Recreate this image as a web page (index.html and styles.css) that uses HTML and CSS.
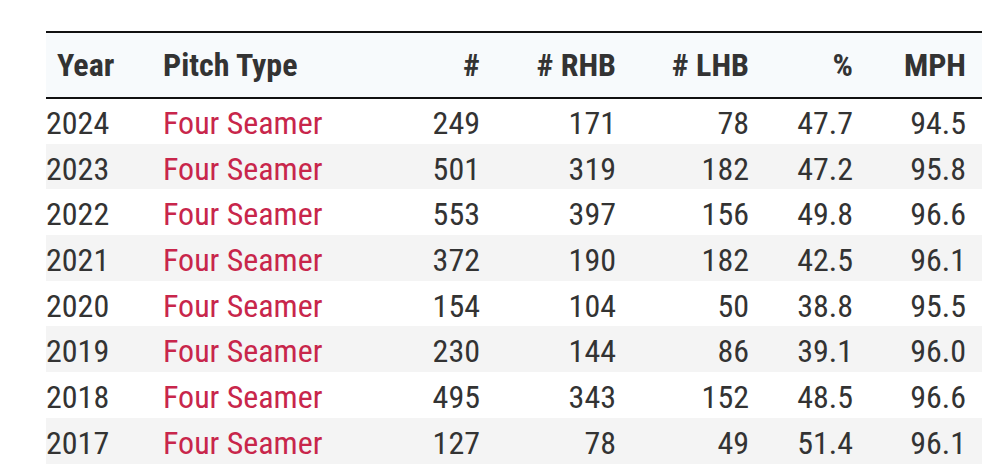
FILE: index.html
```html
<!DOCTYPE html>
<html>
<head>
<meta charset="utf-8">
<link rel="stylesheet" href="styles.css">
</head>
<body>
<div class="wrap">
<table class="stats">
  <colgroup>
    <col class="c-year"><col class="c-type"><col class="c-n"><col class="c-rhb"><col class="c-lhb"><col class="c-pct"><col class="c-mph">
  </colgroup>
  <thead>
    <tr>
      <th class="first">Year</th>
      <th>Pitch Type</th>
      <th class="num">#</th>
      <th class="num"># RHB</th>
      <th class="num"># LHB</th>
      <th class="num">%</th>
      <th class="num last">MPH</th>
    </tr>
  </thead>
  <tbody>
    <tr><td>2024</td><td class="type">Four Seamer</td><td class="num">249</td><td class="num">171</td><td class="num">78</td><td class="num">47.7</td><td class="num last">94.5</td></tr>
    <tr class="alt"><td>2023</td><td class="type">Four Seamer</td><td class="num">501</td><td class="num">319</td><td class="num">182</td><td class="num">47.2</td><td class="num last">95.8</td></tr>
    <tr><td>2022</td><td class="type">Four Seamer</td><td class="num">553</td><td class="num">397</td><td class="num">156</td><td class="num">49.8</td><td class="num last">96.6</td></tr>
    <tr class="alt"><td>2021</td><td class="type">Four Seamer</td><td class="num">372</td><td class="num">190</td><td class="num">182</td><td class="num">42.5</td><td class="num last">96.1</td></tr>
    <tr><td>2020</td><td class="type">Four Seamer</td><td class="num">154</td><td class="num">104</td><td class="num">50</td><td class="num">38.8</td><td class="num last">95.5</td></tr>
    <tr class="alt"><td>2019</td><td class="type">Four Seamer</td><td class="num">230</td><td class="num">144</td><td class="num">86</td><td class="num">39.1</td><td class="num last">96.0</td></tr>
    <tr><td>2018</td><td class="type">Four Seamer</td><td class="num">495</td><td class="num">343</td><td class="num">152</td><td class="num">48.5</td><td class="num last">96.6</td></tr>
    <tr class="alt"><td>2017</td><td class="type">Four Seamer</td><td class="num">127</td><td class="num">78</td><td class="num">49</td><td class="num">51.4</td><td class="num last">96.1</td></tr>
  </tbody>
</table>
</div>
</body>
</html>
```
FILE: styles.css
```css
html, body {
  margin: 0;
  padding: 0;
  background: #ffffff;
}
.wrap {
  padding: 31px 0 0 46px;
}
.stats {
  width: 936px;
  border-collapse: collapse;
  table-layout: fixed;
  font-family: "Roboto Condensed", Roboto, sans-serif;
  font-stretch: condensed;
  font-size: 32px;
  color: #333333;
}
.c-year { width: 117px; }
.c-type { width: 200px; }
.c-n { width: 117px; }
.c-rhb { width: 136px; }
.c-lhb { width: 133px; }
.c-pct { width: 104px; }
.c-mph { width: 129px; }
thead tr {
  background: #f7fafc;
  border-top: 2px solid #111111;
  border-bottom: 2px solid #111111;
}
th {
  height: 64px;
  padding: 0;
  font-weight: 700;
  text-align: left;
  vertical-align: middle;
}
th.first { padding-left: 11px; }
tbody tr {
  height: 45.7px;
}
td {
  padding: 4px 0 0 0;
  vertical-align: middle;
}
.num { text-align: right; }
.last { padding-right: 16px; }
.type { color: #c8264b; }
tr.alt { background: #f4f4f4; }
```
